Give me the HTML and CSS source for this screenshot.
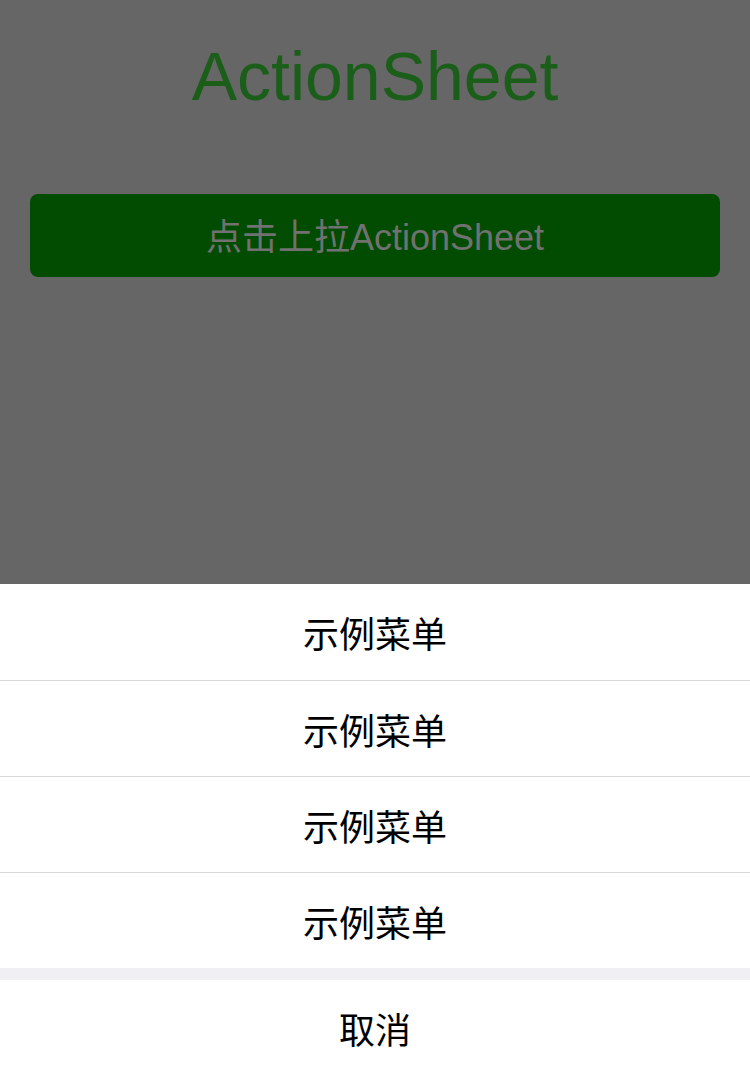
FILE: index.html
```html
<!DOCTYPE html>
<html lang="zh-CN">
<head>
<meta charset="utf-8">
<title>ActionSheet</title>
<link rel="stylesheet" href="styles.css">
</head>
<body>
<div class="page">
  <div class="content">
    <h1 class="title">ActionSheet</h1>
    <div class="btn">点击上拉ActionSheet</div>
  </div>
  <div class="sheet">
    <div class="menu">
      <div class="cell">示例菜单</div>
      <div class="cell">示例菜单</div>
      <div class="cell">示例菜单</div>
      <div class="cell">示例菜单</div>
    </div>
    <div class="cancel">取消</div>
  </div>
</div>
</body>
</html>
```
FILE: styles.css
```css
html, body {
  margin: 0;
  padding: 0;
  height: 1073px;
  overflow: hidden;
  font-family: "Liberation Sans", "Noto Sans CJK SC", sans-serif;
}
.page {
  display: flex;
  flex-direction: column;
  height: 1073px;
  overflow: hidden;
}
.content {
  height: 584px;
  flex: none;
  background: #666667;
  padding-top: 36px;
  box-sizing: border-box;
}
.title {
  margin: 0;
  font-size: 68px;
  line-height: 80px;
  font-weight: normal;
  text-align: center;
  color: #1b5e1a;
}
.btn {
  margin: 78px 30px 0;
  height: 83px;
  box-sizing: border-box;
  padding-top: 4px;
  border-radius: 8px;
  background: #024c01;
  color: #717171;
  font-size: 36px;
  line-height: 79px;
  text-align: center;
  font-family: "Liberation Sans", "Noto Sans CJK SC", sans-serif;
}
.sheet {
  flex: none;
  background: #efeff4;
}
.menu {
  background: #fff;
}
.cell {
  height: 96px;
  box-sizing: border-box;
  display: flex;
  align-items: center;
  justify-content: center;
  font-size: 36px;
  color: #000;
  font-family: "Noto Sans CJK SC", sans-serif;
}
.cell + .cell {
  border-top: 1px solid #d9d9d9;
}
.cancel {
  margin-top: 12px;
  height: 96px;
  background: #fff;
  display: flex;
  align-items: center;
  justify-content: center;
  font-size: 36px;
  color: #000;
  font-family: "Noto Sans CJK SC", sans-serif;
}
```
